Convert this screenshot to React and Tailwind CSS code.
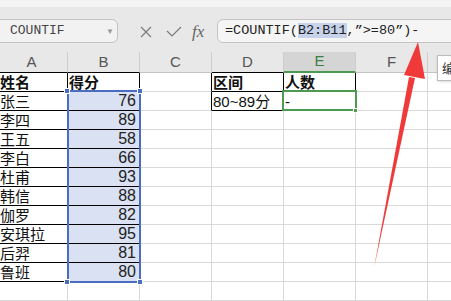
import React from 'react';

const cols = ['A', 'B', 'C', 'D', 'E', 'F', 'G'];

const rows = [
  ['姓名', '得分', '', '区间', '人数'],
  ['张三', '76', '', '80~89分', '-'],
  ['李四', '89'],
  ['王五', '58'],
  ['李白', '66'],
  ['杜甫', '93'],
  ['韩信', '88'],
  ['伽罗', '82'],
  ['安琪拉', '95'],
  ['后羿', '81'],
  ['鲁班', '80'],
  [],
];

// border colours per cell (right / bottom)
const cellClass = (c, r) => {
  const inTable = (c <= 1 && r <= 10) || ((c === 3 || c === 4) && r <= 1);
  const leftOfD = c === 2 && r <= 1;
  if (inTable) return 'border-r border-b border-r-black border-b-black';
  if (leftOfD) return 'border-r border-b border-r-black border-b-[#d9d9d9]';
  return 'border-r border-b border-[#d9d9d9]';
};

const headerClass = (c) => {
  if (c === 4) return 'bg-[#d5d5d5] border-r border-r-[#cdcdcd] border-b-2 border-b-[#4f9a52] text-[#3e7d41]';
  if (c <= 1 || c === 3) return 'bg-[#e8e8e8] border-r border-r-[#cdcdcd] border-b border-b-black text-[#555]';
  return 'bg-[#e8e8e8] border-r border-r-[#cdcdcd] border-b border-b-[#c4c4c4] text-[#555]';
};

const Cell = ({ c, r, value }) => {
  const isNum = c === 1 && r >= 1 && r <= 10;
  const selected = isNum;
  const bold = r === 0 && value;
  return (
    <div
      className={`h-[19px] w-[72px] shrink-0 flex items-center overflow-visible whitespace-nowrap ${cellClass(c, r)} ${selected ? 'bg-[#d9e1f2]' : 'bg-white'} ${isNum ? 'justify-end pr-[3px]' : c === 0 ? 'pl-[4px]' : 'pl-[1px]'}`}
    >
      {isNum ? (
        <span className="font-['Liberation_Sans',sans-serif] text-[16px] leading-none text-[#222]">{value}</span>
      ) : (
        <span
          className={`font-['Liberation_Sans','Noto_Sans_CJK_SC',sans-serif] text-[15px] leading-none text-[#111] ${bold ? 'font-bold' : ''}`}
        >
          {value}
        </span>
      )}
    </div>
  );
};

export default function App() {
  return (
    <div className="relative w-[451px] h-[301px] overflow-hidden bg-white">
      {/* top strip */}
      <div className="h-[7px] bg-[#f4f4f4]" />

      {/* formula bar */}
      <div className="h-[45px] bg-[#e8e8e8] flex items-start pt-[12px]">
        <div className="ml-[-6px] w-[124px] h-[24px] shrink-0 rounded-md border border-[#c4c4c4] bg-[#f2f2f2] flex items-center pl-[15px] pr-[3px]">
          <span className="font-['Liberation_Mono',monospace] text-[13px] text-[#444] flex-1">COUNTIF</span>
          <span className="text-[8px] text-[#999]">▼</span>
        </div>
        <div className="ml-[22px] mt-[7px] w-[12px] h-[12px] shrink-0">
          <svg width="12" height="12" viewBox="0 0 12 12">
            <path d="M1 1 L11 11 M11 1 L1 11" stroke="#7a7a7a" strokeWidth="1.2" fill="none" />
          </svg>
        </div>
        <div className="ml-[14px] mt-[7px] w-[16px] h-[11px] shrink-0">
          <svg width="16" height="11" viewBox="0 0 16 11">
            <path d="M1 5 L6 10 L15 1" stroke="#7a7a7a" strokeWidth="1.2" fill="none" />
          </svg>
        </div>
        <div className="ml-[10px] w-[16px] h-[24px] shrink-0 flex items-center">
          <span className="font-['Liberation_Serif',serif] italic text-[17px] leading-none text-[#666]">fx</span>
        </div>
        <div className="ml-[9px] mr-[-10px] flex-1 h-[24px] rounded-l-md border border-[#c4c4c4] bg-[#f5f5f5] flex items-center pl-[7px]">
          <span className="font-['Liberation_Mono',monospace] text-[13.5px] text-[#222] whitespace-nowrap">
            =COUNTIF(<span className="bg-[#c6d3ea]">B2:B11</span>,”&gt;=80”)-
          </span>
        </div>
      </div>

      {/* sheet */}
      <div className="ml-[-4px] w-[504px]">
        <div className="flex h-[21px]">
          {cols.map((l, c) => (
            <div
              key={l}
              className={`w-[72px] shrink-0 flex items-center justify-center font-['Liberation_Sans',sans-serif] text-[15px] ${headerClass(c)}`}
            >
              {l}
            </div>
          ))}
        </div>
        {rows.map((row, r) => (
          <div key={r} className="flex">
            {cols.map((l, c) => (
              <Cell key={l} c={c} r={r} value={row[c] || ''} />
            ))}
          </div>
        ))}
      </div>

      {/* selection B2:B11 */}
      <div className="absolute left-[67px] top-[90px] w-[74px] h-[193px] border-2 border-[#4a6dc2]" />
      <div className="absolute left-[64px] top-[88px] w-[6px] h-[6px] bg-[#4a6dc2] border border-white" />
      <div className="absolute left-[137px] top-[88px] w-[6px] h-[6px] bg-[#4a6dc2] border border-white" />
      <div className="absolute left-[64px] top-[279px] w-[6px] h-[6px] bg-[#4a6dc2] border border-white" />
      <div className="absolute left-[137px] top-[279px] w-[6px] h-[6px] bg-[#4a6dc2] border border-white" />

      {/* active cell E2 */}
      <div className="absolute left-[282px] top-[90px] w-[75px] h-[21px] border-2 border-[#4f9a52]" />
      <div className="absolute left-[353px] top-[108px] w-[5px] h-[5px] bg-[#4f9a52] border border-white" />

      {/* tooltip */}
      <div className="absolute left-[437px] top-[55px] w-[70px] h-[26px] bg-white border border-[#bdbdbd] shadow flex items-center pl-[4px]">
        <span className="font-['Noto_Sans_CJK_SC',sans-serif] text-[13px] text-[#333] whitespace-nowrap">编辑栏</span>
      </div>

      {/* red arrow */}
      <svg className="absolute left-0 top-0" width="451" height="301" viewBox="0 0 451 301">
        <polygon points="374,268 409,77 415,78" fill="#f03a3a" />
        <polygon points="418,42 404,75 425,79" fill="#f03a3a" />
      </svg>
    </div>
  );
}
